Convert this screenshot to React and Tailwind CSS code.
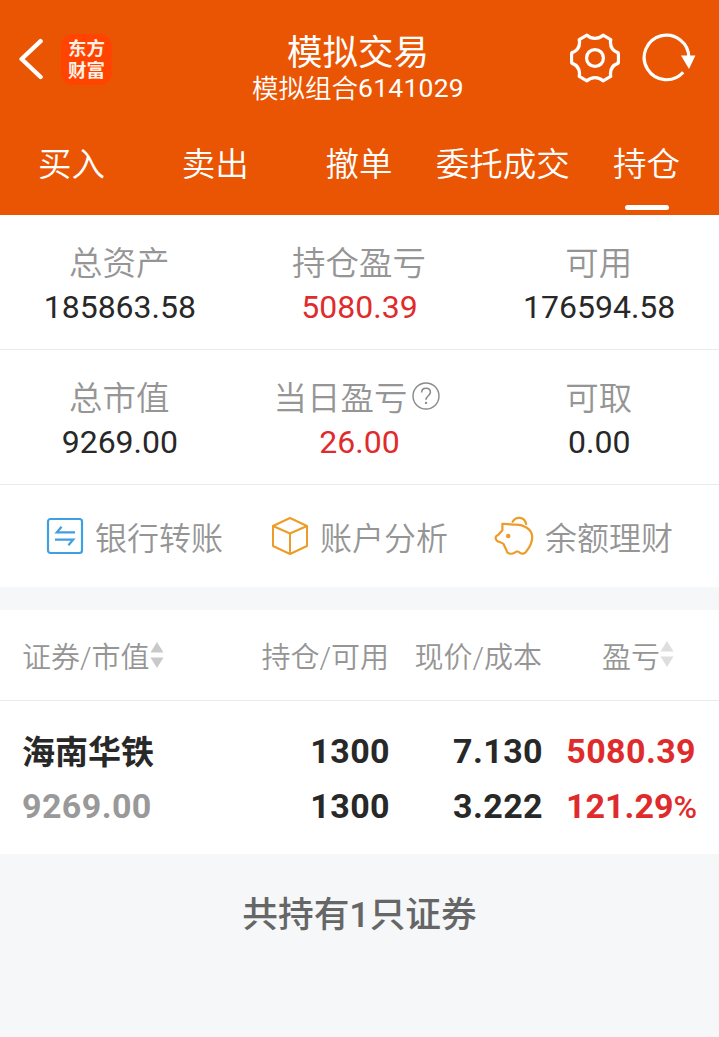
import React from 'react';

const TABS = ['买入', '卖出', '撤单', '委托成交', '持仓'];

const STATS = [
    [
        { label: '总资产', value: '185863.58' },
        { label: '持仓盈亏', value: '5080.39', red: true },
        { label: '可用', value: '176594.58' },
    ],
    [
        { label: '总市值', value: '9269.00' },
        { label: '当日盈亏', value: '26.00', red: true, help: true },
        { label: '可取', value: '0.00' },
    ],
];

// ── Icons ─────────────────────────────────────────────────
const BackIcon = () => (
    <svg width="26" height="44" viewBox="0 0 26 44" fill="none" stroke="#fff" strokeWidth="4.4" strokeLinecap="round" strokeLinejoin="round">
        <path d="M21.6 3.2 2.6 21l19 18" />
    </svg>
);

const GearIcon = () => (
    <svg width="50" height="50" viewBox="0.6 0.6 50.8 50.8" fill="none" stroke="#fff" strokeWidth="3.3" strokeLinejoin="round">
        <path d="M17.8 2.8C22.5 7 29.5 7 34.2 2.8L42 7.3C40.8 14 43.4 18.4 49.6 20.8Q50.2 26 49.6 31.2C43.4 33.6 40.8 38 42 44.7L34.2 49.2C29.5 45 22.5 45 17.8 49.2L10 44.7C11.2 38 8.6 33.6 2.4 31.2Q1.8 26 2.4 20.8C8.6 18.4 11.2 14 10 7.3Z" />
        <circle cx="26" cy="26" r="8.6" />
    </svg>
);

const RefreshIcon = () => (
    <svg width="54" height="50" viewBox="0 0 54 50" fill="none">
        <path d="M41.2 39.2A22.3 22.3 0 1 1 46.8 25" stroke="#fff" strokeWidth="3.2" />
        <path d="M39 22.4h14.4L47 36Z" fill="#fff" />
    </svg>
);

const HelpIcon = () => (
    <svg width="28" height="28" viewBox="0 0 28 28" fill="none" stroke="#8a8a8a" strokeWidth="1.4" className="relative -top-[3px]">
        <circle cx="14" cy="14" r="13" />
        <path d="M9.6 10.6C9.6 7.8 11.4 6.2 14 6.2s4.4 1.6 4.4 4.1c0 3.3-4.4 3.7-4.4 7.5" strokeWidth="1.6" />
        <circle cx="14" cy="20.9" r="1.2" fill="#8a8a8a" stroke="none" />
    </svg>
);

const TransferIcon = () => (
    <svg width="38" height="38" viewBox="0 0 38 38" fill="none" stroke="#3f9fe0" strokeWidth="2.2">
        <rect x="2" y="2" width="34" height="34" rx="2.5" />
        <path d="M29 15.4H10.8L15.6 9.8M9 22.6h18.2L22.4 28.2" />
    </svg>
);

const CubeIcon = () => (
    <svg width="38" height="40" viewBox="0 0 38 40" fill="none" stroke="#ec9c28" strokeWidth="2" strokeLinejoin="round">
        <path d="M19 2 36 10V30L19 38 2 30V10ZM2 10l17 7.5L36 10M19 17.5V38" />
    </svg>
);

const PiggyIcon = () => (
    <svg width="40" height="40" viewBox="0 0 40 40" fill="none" stroke="#ec9c28" strokeWidth="2.2" strokeLinecap="round" strokeLinejoin="round">
        <path d="M8.4 7.8C12 7.4 16 9 20 8.6C30 8 38.2 13.5 38.2 21C38.2 27 35.4 31.6 32.4 35.2C31 38 27.6 38.2 26 36.8C24.8 35.2 22.2 35 20.8 36.6C18.6 38 15.4 37.8 13.4 36.6C12.4 33.8 11 31.6 9.6 28C7.6 26.4 5 26.2 2.8 24.6C1.4 22.8 1.4 21 2.4 20C5 19 5.8 17 8.4 14.2Z" />
        <path d="M18.6 5.8C22-.2 30.4.6 32.2 8" />
        <circle cx="14.2" cy="20" r="2.3" fill="#ec9c28" stroke="none" />
    </svg>
);

const SortIcon = ({ className }) => (
    <svg width="14" height="28" viewBox="0 0 14 28" className={className}>
        <path d="M7 1 13.5 11.5H.5ZM7 27 .5 16.5h13Z" fill="currentColor" />
    </svg>
);

// ── Sections ──────────────────────────────────────────────
const Header = () => (
    <header className="flex h-[215px] flex-col bg-[#ea5504] text-white">
        <div className="flex h-[115px] items-start justify-between">
            <div className="flex w-[200px] items-center gap-[16px] pt-[34px] pl-[19px]">
                <BackIcon />
                <div className="flex h-[51px] w-[51px] items-center justify-center rounded-xl bg-[#ff4400] pb-[4px] font-['Noto_Sans_CJK_SC',sans-serif] text-[18.5px] leading-[22px] font-bold text-[#fff0e6]">
                    <span>东方<br />财富</span>
                </div>
            </div>
            <div className="flex flex-col items-center pt-[33px] pr-[3px]">
                <h1 className="text-[35.5px] leading-[40px]">模拟交易</h1>
                <p className="flex text-[26.5px] leading-[32px] font-[350]">
                    模拟组合<span className="relative -top-px font-normal tracking-[0.25px]">6141029</span>
                </p>
            </div>
            <div className="flex w-[200px] items-center justify-end gap-[22px] pt-[33px] pr-[23px]">
                <GearIcon />
                <RefreshIcon />
            </div>
        </div>
        <nav className="grid flex-1 grid-cols-5">
            {TABS.map((tab) => (
                <div key={tab} className="flex flex-col items-center justify-between pt-[30px] pb-[5px]">
                    <span className="pr-[1px] text-[33.5px] leading-[40px] font-[350] whitespace-nowrap">{tab}</span>
                    {tab === '持仓' && <span className="h-[5px] w-[44px] rounded-full bg-white" />}
                </div>
            ))}
        </nav>
    </header>
);

const Stat = ({ label, value, red, help }) => (
    <div className="flex flex-col items-center pt-[28px]">
        <div className={`flex items-center gap-[5px] text-[33.5px] leading-[42px] font-[350] text-[#959595] ${help ? 'pr-[5px]' : 'pr-[1px]'}`}>
            <span>{label}</span>
            {help && <HelpIcon />}
        </div>
        <span className={`text-[32px] leading-[44px] ${red ? 'text-[#e02b2d]' : 'text-[#282828]'}`}>{value}</span>
    </div>
);

const Action = ({ icon, label }) => (
    <div className="flex items-center gap-[11px]">
        {icon}
        <span className="pt-[6px] text-[32px] leading-[40px] font-[350] whitespace-nowrap">{label}</span>
    </div>
);

export default function App() {
    return (
        <div className="flex h-[1037px] w-[719px] flex-col overflow-hidden bg-[#f5f7f9] font-['Roboto','Noto_Sans_CJK_SC',sans-serif]">
            <Header />

            <section className="bg-white">
                {STATS.map((row, i) => (
                    <div key={i} className="grid h-[135px] grid-cols-3 border-b border-[#ebebeb]">
                        {row.map((item) => <Stat key={item.label} {...item} />)}
                    </div>
                ))}
                <div className="flex h-[102px] items-center gap-[48px] pl-[46px] text-[#959595]">
                    <Action icon={<TransferIcon />} label="银行转账" />
                    <Action icon={<CubeIcon />} label="账户分析" />
                    <div className="-ml-[2px]">
                        <Action icon={<PiggyIcon />} label="余额理财" />
                    </div>
                </div>
            </section>

            <section className="mt-[23px] bg-white">
                <div className="grid h-[91px] grid-cols-[239px_150px_153px_177px] items-center border-b border-[#ebebeb] text-[29px] font-[350] text-[#959595]">
                    <div className="flex items-center pl-[22px]">
                        <span className="pt-[7px]">证券/市值</span>
                        <SortIcon className="text-[#c9c9c9]" />
                    </div>
                    <div className="pt-[7px] text-right">持仓/可用</div>
                    <div className="pt-[7px] text-right">现价/成本</div>
                    <div className="flex items-center justify-end pr-[45px]">
                        <span className="pt-[7px]">盈亏</span>
                        <SortIcon className="relative -top-px text-[#dedede]" />
                    </div>
                </div>
                <div className="grid h-[153px] grid-cols-[239px_151px_153px_153px] content-center pt-[3px] text-[34px] leading-[55px] font-bold tracking-[0.4px] text-[#282828]">
                    <div className="pt-[3px] pl-[22px] text-[33px] leading-[52px] tracking-normal">海南华铁</div>
                    <div className="text-right">1300</div>
                    <div className="text-right">7.130</div>
                    <div className="text-right text-[#e02b2d]">5080.39</div>
                    <div className="pl-[22px] text-[#999]">9269.00</div>
                    <div className="text-right">1300</div>
                    <div className="text-right">3.222</div>
                    <div className="-mr-[1px] text-right tracking-normal text-[#e02b2d]">
                        121.29<span className="text-[32px] font-medium">%</span>
                    </div>
                </div>
            </section>

            <p className="pt-[36px] text-center text-[35.7px] leading-[50px] font-medium text-[#666]">共持有1只证券</p>
        </div>
    );
}
